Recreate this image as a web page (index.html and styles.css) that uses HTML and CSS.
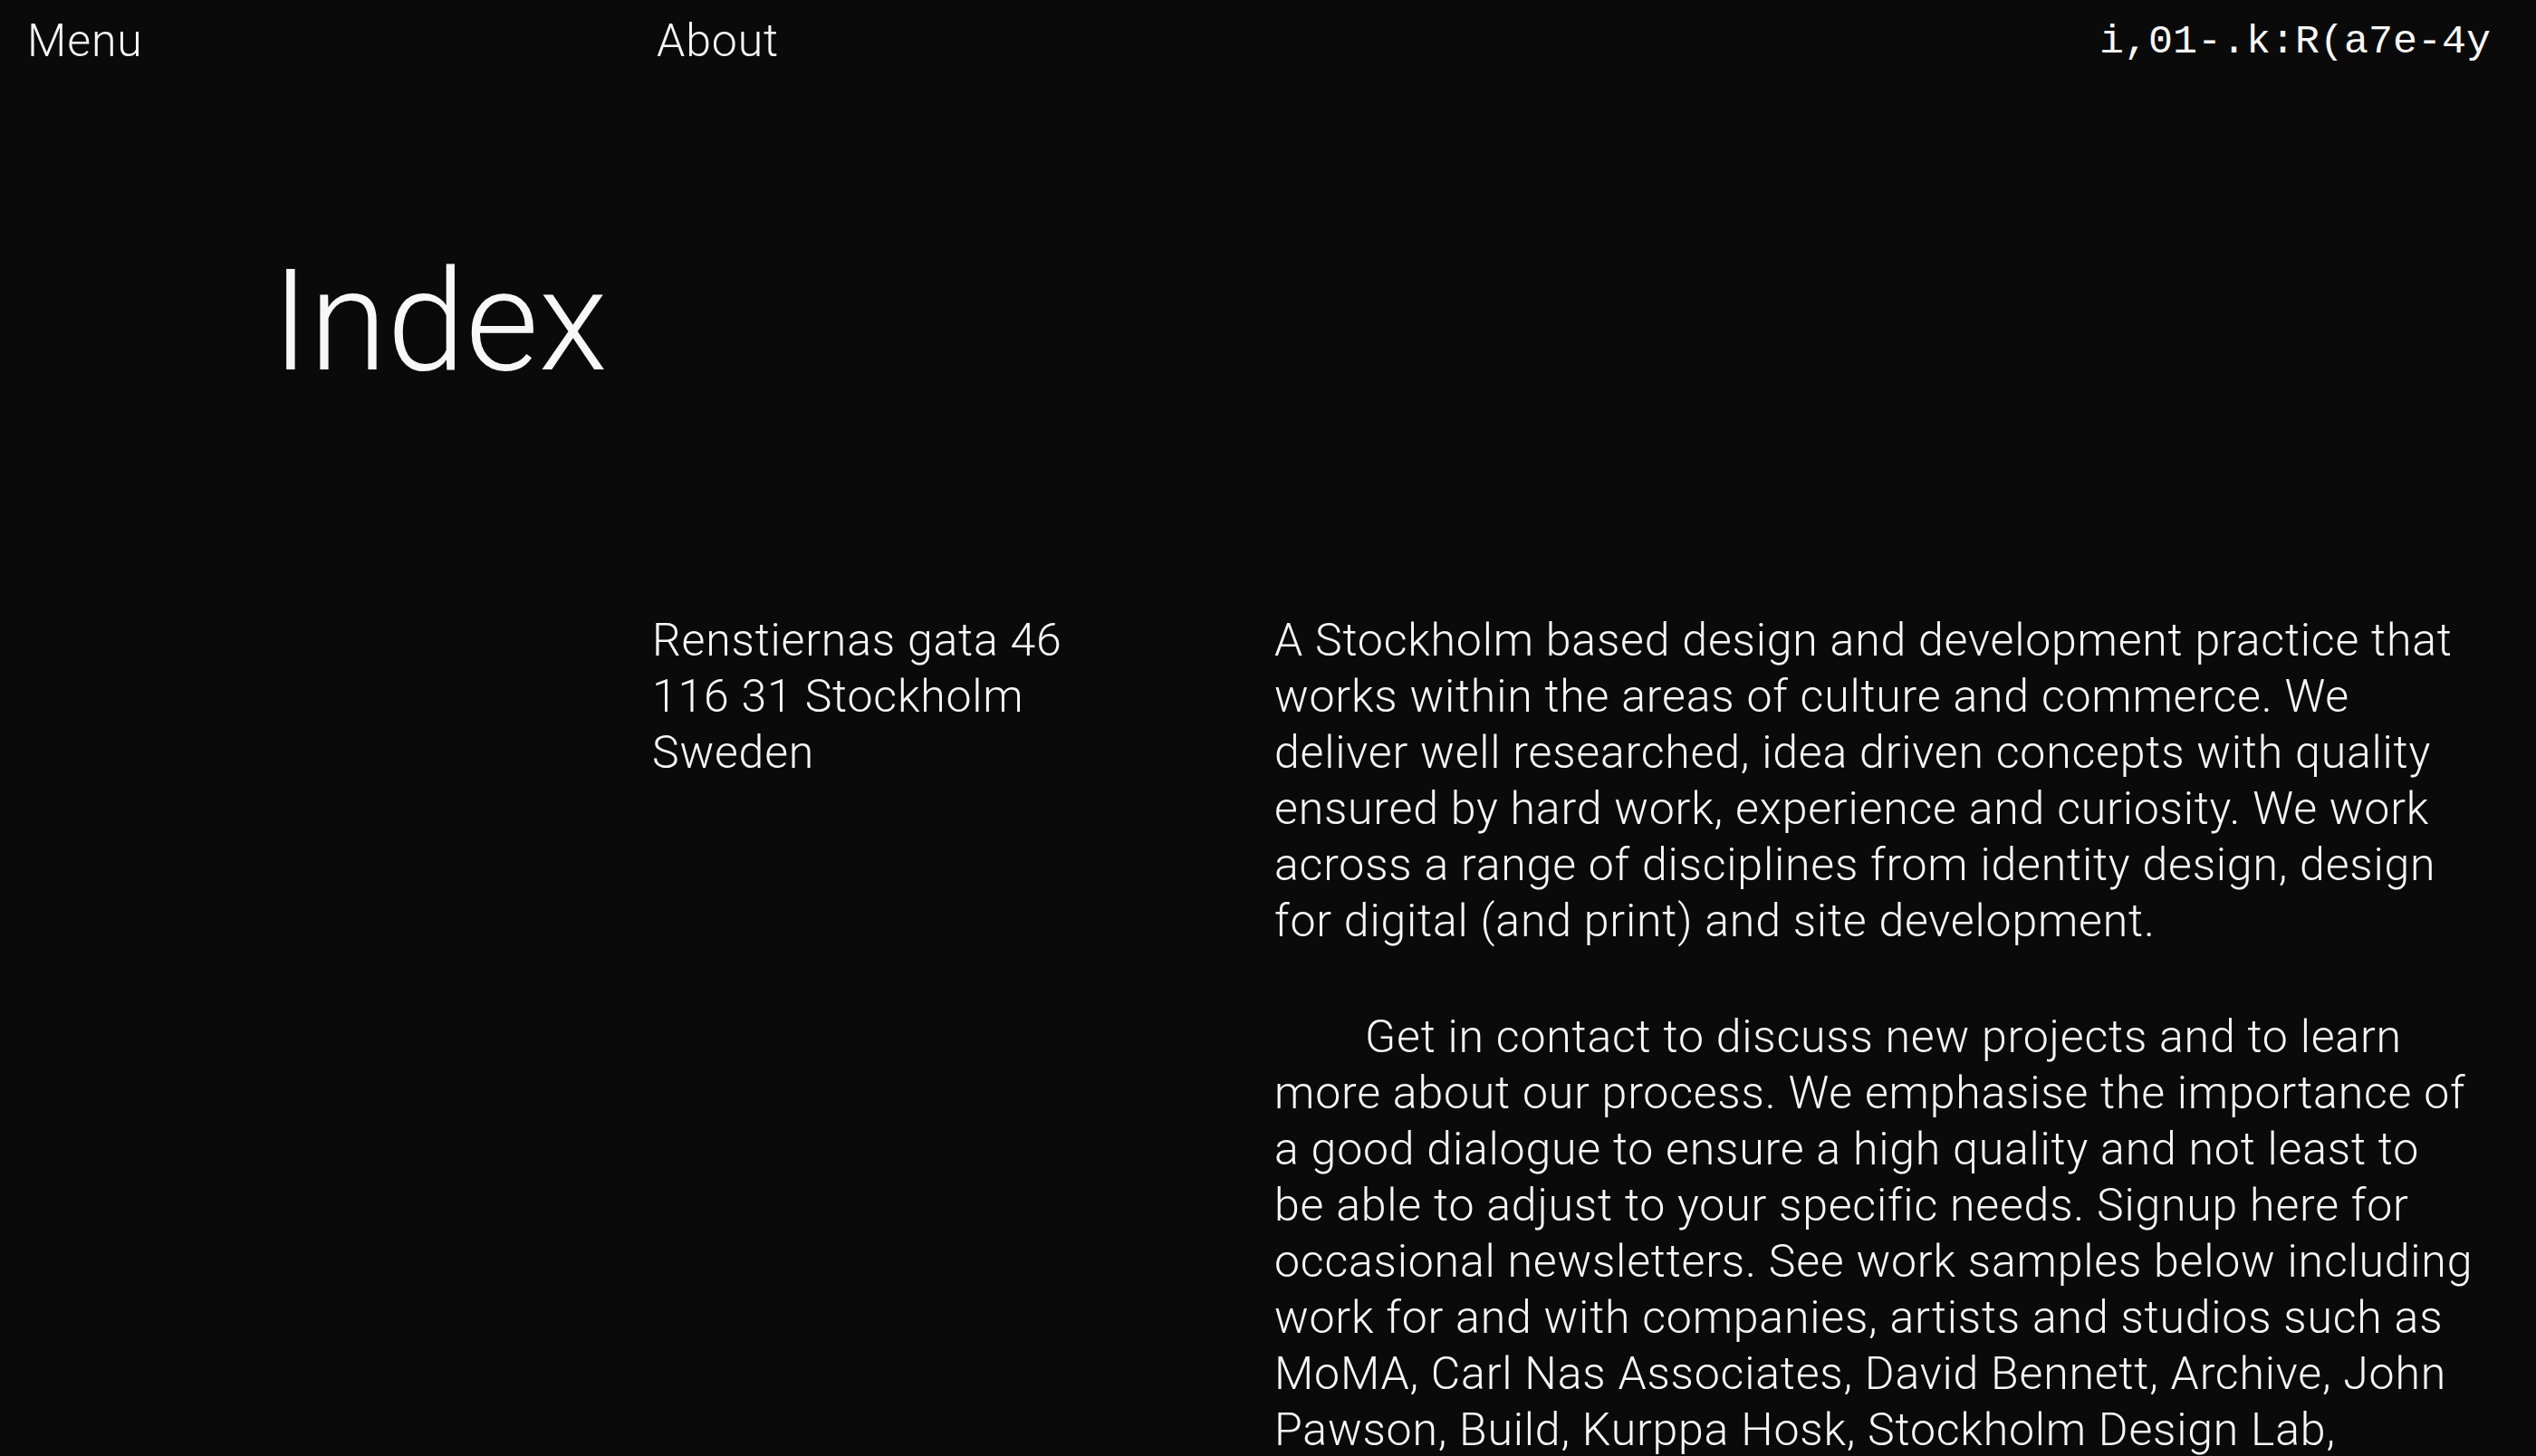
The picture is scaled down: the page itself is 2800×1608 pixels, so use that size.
FILE: index.html
```html
<!DOCTYPE html>
<html lang="en">
<head>
<meta charset="utf-8">
<title>Index</title>
<link rel="stylesheet" href="styles.css">
</head>
<body>
<header class="top">
  <a class="nav-link" href="#">Menu</a>
  <a class="nav-link" href="#">About</a>
  <span class="code">i,01-.k:R(a7e-4y</span>
</header>
<main class="page">
  <h1 class="title">Index</h1>
  <section class="info">
    <address class="address">Renstiernas gata 46<br>116 31 Stockholm<br>Sweden</address>
    <div class="text">
      <p class="para">A Stockholm based design and development practice that works within the areas of culture and commerce. We deliver well researched, idea driven concepts with quality ensured by hard work, experience and curiosity. We work across a range of disciplines from identity design, design for digital (and print) and site development.</p>
      <p class="para indent">Get in contact to discuss new projects and to learn more about our process. We emphasise the importance of a good dialogue to ensure a high quality and not least to be able to adjust to your specific needs. Signup here for occasional newsletters. See work samples below including work for and with companies, artists and studios such as MoMA, Carl Nas Associates, David Bennett, Archive, John Pawson, Build, Kurppa Hosk, Stockholm Design Lab, Nationalmuseum and many more.</p>
    </div>
  </section>
</main>
</body>
</html>
```

FILE: styles.css
```css
* { box-sizing: border-box; }

html, body {
  margin: 0;
  padding: 0;
  background: #0a0a0a;
  color: #f7f7f7;
}

body {
  font-family: Roboto, "Liberation Sans", sans-serif;
  font-weight: 300;
  font-size: 50px;
  line-height: 62px;
  letter-spacing: 0.8px;
  -webkit-font-smoothing: antialiased;
}

a { color: inherit; text-decoration: none; }

.top {
  display: grid;
  grid-template-columns: 695px 1fr auto;
  align-items: baseline;
  padding: 14px 50px 0 30px;
}

.nav-link {
  font-size: 50px;
  line-height: 62px;
  letter-spacing: 0.9px;
}

.code {
  font-family: "Liberation Mono", "DejaVu Sans Mono", monospace;
  font-weight: 400;
  font-size: 45px;
  line-height: 62px;
  letter-spacing: 0;
  position: relative;
  top: -4px;
}

.page {
  padding: 0 66px 0 30px;
}

.title {
  margin: 198px 0 0;
  padding-left: 270px;
  font-weight: 300;
  font-size: 156px;
  line-height: 150px;
  letter-spacing: 0;
}

.info {
  display: grid;
  grid-template-columns: 687px 1fr;
  margin-top: 246px;
  padding-left: 690px;
}

.address {
  font-style: normal;
}

.text {
  min-width: 0;
}

.para {
  margin: 0;
}

.para + .para {
  margin-top: 66px;
}

.indent {
  text-indent: 100px;
}
```
